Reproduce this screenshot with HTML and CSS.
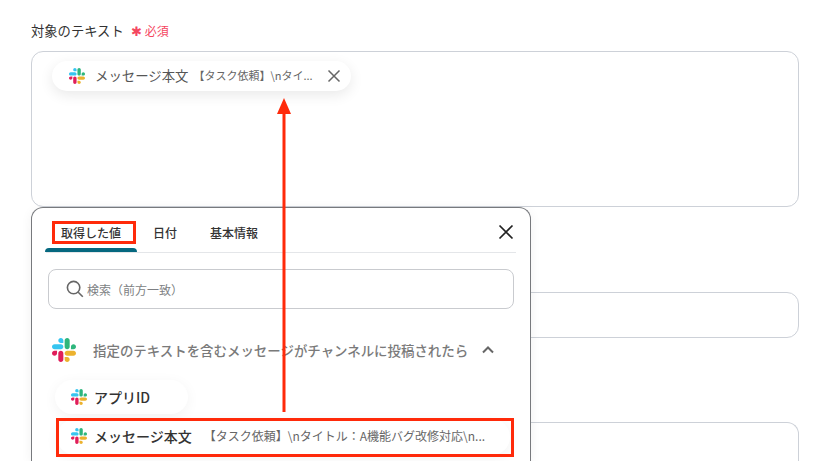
FILE: index.html
```html
<!DOCTYPE html>
<html lang="ja">
<head>
<meta charset="utf-8">
<title>対象のテキスト</title>
<link rel="stylesheet" href="styles.css">
</head>
<body>
<svg class="defs" width="0" height="0" aria-hidden="true">
  <symbol id="slack" viewBox="0 0 122.8 122.8">
    <path d="M25.8 77.6c0 7.1-5.8 12.9-12.9 12.9S0 84.7 0 77.6s5.8-12.9 12.9-12.9h12.9v12.9zm6.5 0c0-7.1 5.8-12.9 12.9-12.9s12.9 5.8 12.9 12.9v32.3c0 7.1-5.8 12.9-12.9 12.9s-12.9-5.8-12.9-12.9V77.6z" fill="#e01e5a"/>
    <path d="M45.2 25.8c-7.1 0-12.9-5.8-12.9-12.9S38.1 0 45.2 0s12.9 5.8 12.9 12.9v12.9H45.2zm0 6.5c7.1 0 12.9 5.8 12.9 12.9s-5.8 12.9-12.9 12.9H12.9C5.8 58.1 0 52.3 0 45.2s5.8-12.9 12.9-12.9h32.3z" fill="#36c5f0"/>
    <path d="M97 45.2c0-7.1 5.8-12.9 12.9-12.9s12.9 5.8 12.9 12.9-5.8 12.9-12.9 12.9H97V45.2zm-6.5 0c0 7.1-5.8 12.9-12.9 12.9s-12.9-5.8-12.9-12.9V12.9C64.7 5.8 70.5 0 77.6 0s12.9 5.8 12.9 12.9v32.3z" fill="#2eb67d"/>
    <path d="M77.6 97c7.1 0 12.9 5.8 12.9 12.9s-5.8 12.9-12.9 12.9-12.9-5.8-12.9-12.9V97h12.9zm0-6.5c-7.1 0-12.9-5.8-12.9-12.9s5.8-12.9 12.9-12.9h32.3c7.1 0 12.9 5.8 12.9 12.9s-5.8 12.9-12.9 12.9H77.6z" fill="#ecb22e"/>
  </symbol>
</svg>

<main class="form">
  <div class="label-row">
    <span class="label">対象のテキスト</span>
    <span class="req"><span class="star">✱</span>必須</span>
  </div>
  <div class="box box-text">
    <div class="token">
      <svg class="logo-s"><use href="#slack"/></svg>
      <span class="token-name">メッセージ本文</span>
      <span class="token-val">【タスク依頼】\nタイ...</span>
      <svg class="token-x" viewBox="0 0 14 14"><path d="M1.5 1.5l11 11M12.5 1.5l-11 11"/></svg>
    </div>
  </div>
  <div class="box box-mid"></div>
  <div class="box box-low"></div>
</main>

<section class="popup">
  <div class="tabs">
    <div class="tab tab-on">取得した値</div>
    <div class="tab tab-date">日付</div>
    <div class="tab tab-info">基本情報</div>
    <svg class="close" viewBox="0 0 16 16"><path d="M1.5 1.5l13 13M14.5 1.5l-13 13"/></svg>
  </div>
  <div class="search">
    <svg class="lens" viewBox="0 0 18 18"><circle cx="7.6" cy="7.6" r="6.2"/><path d="M12.2 12.2l4.6 4.6"/></svg>
    <span class="placeholder">検索（前方一致）</span>
  </div>
  <div class="group">
    <svg class="logo-l"><use href="#slack"/></svg>
    <span class="group-title">指定のテキストを含むメッセージがチャンネルに投稿されたら</span>
    <svg class="chev" viewBox="0 0 12 8"><path d="M1 6.5l5-5 5 5"/></svg>
  </div>
  <div class="chip chip-app">
    <svg class="logo-s"><use href="#slack"/></svg>
    <span class="chip-name">アプリID</span>
  </div>
  <div class="chip chip-msg">
    <svg class="logo-s"><use href="#slack"/></svg>
    <span class="chip-name">メッセージ本文</span>
    <span class="chip-val">【タスク依頼】\nタイトル：A機能バグ改修対応\n...</span>
  </div>
</section>

<div class="mark mark-tab"></div>
<div class="mark mark-row"></div>
<svg class="arrow" viewBox="0 0 16 314"><path class="arrow-head" d="M8 0L15 16H1z"/><rect class="arrow-line" x="6.5" y="14" width="3" height="300"/></svg>
</body>
</html>
```

FILE: styles.css
```css
* { box-sizing: border-box; }
html, body { margin: 0; height: 461px; overflow: hidden; background: #fff; }
body { font-family: "Noto Sans CJK JP", "Noto Sans", sans-serif; color: #333; position: relative; }
.defs { position: absolute; }

.form { padding: 20px 34px 0 31px; display: flex; flex-direction: column; }
.label-row { display: flex; align-items: center; height: 21px; margin-bottom: 10px; }
.label { font-size: 13.3px; color: #333; }
.req { display: flex; align-items: center; margin-left: 7px; font-size: 12px; color: #f4475f; }
.star { font-size: 13px; margin-right: 3px; }

.box { border: 1px solid #cdd1d8; border-radius: 12px; background: #fff; flex: none; }
.box-text { height: 156px; padding: 9px 0 0 20px; }
.box-mid { height: 46px; margin-top: 85px; }
.box-low { height: 39px; margin-top: 84px; border-bottom: 0; border-radius: 12px 12px 0 0; }

.token { width: 299px; height: 30px; border-radius: 15px; background: #fff; box-shadow: 0 4px 14px rgba(0, 0, 0, .09); display: flex; align-items: center; padding-left: 17px; }
.logo-s { width: 16px; height: 16px; flex: none; }
.token-name { margin-left: 10px; padding-bottom: 2px; font-size: 13.4px; color: #555; white-space: nowrap; }
.token-val { margin-left: 5px; padding-bottom: 2px; font-size: 11px; color: #666; white-space: nowrap; width: 134px; }
.token-x { width: 14px; height: 14px; margin-left: 0; fill: none; stroke: #666; stroke-width: 1.5; flex: none; }

.popup { position: absolute; left: 31px; top: 207px; width: 500px; height: 254px; background: #fff; border: 1px solid #77797d; border-bottom: 0; border-radius: 12px 12px 0 0; box-shadow: 0 2px 12px rgba(0, 0, 0, .06); padding: 0 16px; }
.tabs { position: relative; height: 45px; margin: 0 -2px; border-bottom: 1px solid #e4e6e9; display: flex; font-size: 12px; font-weight: 500; color: #333; }
.tab { position: relative; height: 44px; line-height: 49px; white-space: nowrap; text-align: center; }
.tab-on { width: 92px; margin-left: -1px; }
.tab-on::after { content: ""; position: absolute; left: 0; right: 0; bottom: 0; height: 4px; background: #05687f; border-radius: 4px 4px 0 0; }
.tab-date { margin-left: 16px; }
.tab-info { margin-left: 33px; }
.close { position: absolute; right: 2px; top: 16px; width: 16px; height: 16px; fill: none; stroke: #222; stroke-width: 1.7; }

.search { margin-top: 16px; height: 40px; border: 1px solid #c9cbcf; border-radius: 8px; display: flex; align-items: center; padding-left: 17px; }
.lens { width: 18px; height: 18px; fill: none; stroke: #666; stroke-width: 1.6; flex: none; }
.placeholder { margin-left: 3px; font-size: 12px; color: #7d7f83; }

.group { margin-top: 24px; height: 34px; display: flex; align-items: center; padding-left: 4px; }
.logo-l { width: 24px; height: 24px; flex: none; }
.group-title { margin-left: 17px; font-size: 13.45px; font-weight: 500; color: #7a7a7a; white-space: nowrap; }
.chev { width: 12px; height: 8px; margin-left: 14px; fill: none; stroke: #666; stroke-width: 2; flex: none; }

.chip { display: flex; align-items: center; background: #fff; border-radius: 18px; box-shadow: 0 3px 14px rgba(0, 0, 0, .05); }
.chip-app { margin: 13px 0 0 7px; width: 133px; height: 34px; padding-left: 16px; }
.chip-msg { margin: 5px 0 0 9px; width: 453px; height: 36px; padding-left: 14px; }
.chip-name { margin-left: 7px; font-size: 14px; font-weight: 500; color: #333; white-space: nowrap; }
.chip-msg .logo-s { margin-bottom: 2px; }
.chip-msg .chip-name { padding-bottom: 3px; }
.chip-val { margin-left: 12px; padding-bottom: 3px; font-size: 12px; color: #666; white-space: nowrap; }

.mark { position: absolute; border: 3px solid #ff2a0a; }
.mark-tab { left: 52px; top: 221px; width: 84px; height: 23px; }
.mark-row { left: 56px; top: 418px; width: 458px; height: 39px; }
.arrow { position: absolute; left: 276px; top: 98px; width: 16px; height: 314px; }
.arrow-head, .arrow-line { fill: #ff2a0a; }
```
